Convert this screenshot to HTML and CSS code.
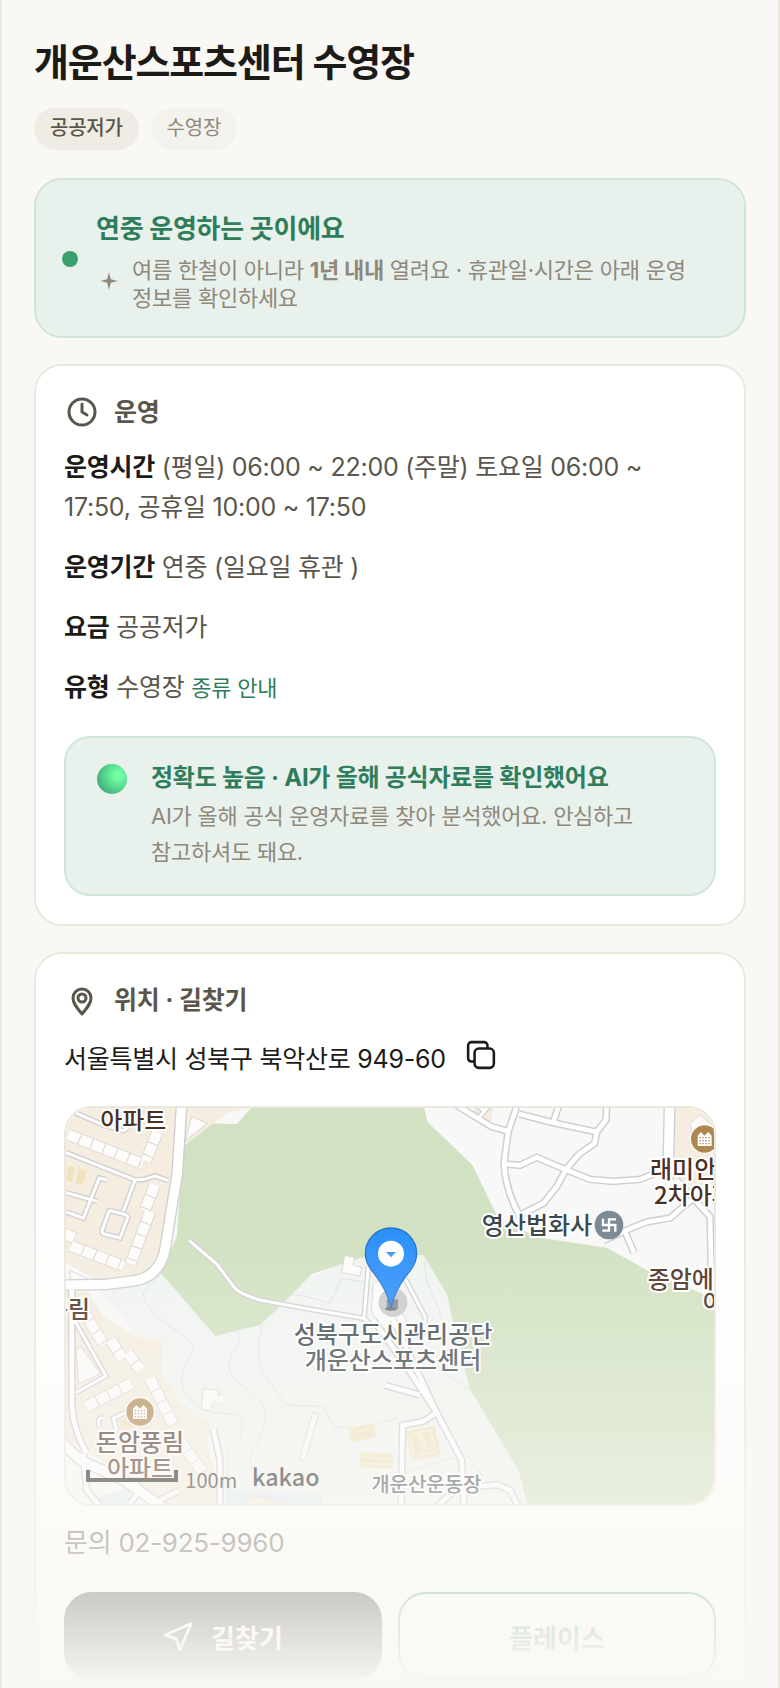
FILE: index.html
```html
<!DOCTYPE html>
<html lang="ko">
  <head>
    <meta charset="UTF-8" />
    <meta name="viewport" content="width=device-width, initial-scale=1.0" />
    <title>개운산스포츠센터 수영장</title>
    <link rel="stylesheet" href="styles.css">
  </head>
  <body>
    <main class="screen">
      <h1>개운산스포츠센터 수영장</h1>
      <div class="chips">
        <span class="chip chip-price">공공저가</span>
        <span class="chip">수영장</span>
      </div>

      <section class="notice">
        <span class="dot"></span>
        <div class="notice-body">
          <h2>연중 운영하는 곳이에요</h2>
          <div class="notice-sub">
            <svg class="sparkle" viewBox="0 0 24 24"><path d="M12 4l1.700 6.300L20 12l-6.300 1.700L12 20l-1.700-6.300L4 12l6.300-1.700z" /></svg>
            <p>여름 한철이 아니라 <b>1년 내내</b> 열려요 · 휴관일·시간은 아래 운영 정보를 확인하세요</p>
          </div>
        </div>
      </section>

      <section class="card">
        <h2 class="card-title">
          <svg viewBox="0 0 36 36"><circle cx="18" cy="18" r="13" /><path d="M18 10v8l5 3" /></svg>
          운영
        </h2>
        <div class="info">
          <p><b>운영시간</b> (평일) 06:00 ~ 22:00 (주말) 토요일 06:00 ~ 17:50, 공휴일 10:00 ~ 17:50</p>
          <p><b>운영기간</b> 연중 (일요일 휴관 )</p>
          <p><b>요금</b> 공공저가</p>
          <p><b>유형</b> 수영장 <a href="#types">종류 안내</a></p>
        </div>
        <div class="accuracy">
          <span class="orb"></span>
          <div>
            <h3>정확도 높음 · AI가 올해 공식자료를 확인했어요</h3>
            <p>AI가 올해 공식 운영자료를 찾아 분석했어요. 안심하고 참고하셔도 돼요.</p>
          </div>
        </div>
      </section>

      <section class="card">
        <h2 class="card-title">
          <svg viewBox="0 0 36 36"><path d="M18 32C12 25 9 21 9 16a9 9 0 0 1 18 0c0 5-3 9-9 16z" /><circle cx="18" cy="16" r="4" /></svg>
          위치 · 길찾기
        </h2>
        <div class="address">
          <span>서울특별시 성북구 북악산로 949-60</span>
          <button class="copy" type="button" aria-label="주소 복사">
            <svg viewBox="0 0 28 28"><rect x="8" y="8" width="18" height="18" rx="4" /><path d="M8 20H5a3 3 0 0 1-3-3V5a3 3 0 0 1 3-3h12a3 3 0 0 1 3 3v3" /></svg>
          </button>
        </div>

        <div class="map">
          <svg viewBox="78 54 1944 1188" preserveAspectRatio="xMidYMid slice">
            <defs>
              <g id="main-roads">
                <path d="M425 40L412 250L378 460Q366 560 280 573L200 583L60 586M60 1050L120 1110L250 1170L380 1260M1889 40L1884 270" />
              </g>
              <g id="roads">
                <path d="M1250 46L1355 110L1405 124L1430 50M1438 72L1540 98L1670 126L1698 90L1700 46M1540 98L1556 46" />
                <path d="M1405 120L1392 220Q1396 300 1440 380M1395 222L1440 226L1490 202L1580 240L1650 268L1720 274L1800 268L1870 240" />
                <path d="M1670 126L1664 160L1620 190L1580 235L1550 290L1510 340L1430 380" />
                <path d="M1690 452L1760 420L1820 396L1890 384L1960 325M1755 425L1782 488M1910 270L1960 325L2010 380L2014 560" />
                <path d="M1060 690L1190 968L1265 1110L1272 1260" />
                <path d="M1000 690L1100 830L1190 968L1150 994L1088 1006L1083 1260M1035 886L1140 915M1180 1260L1250 1195L1370 1184L1410 1200L1440 1260" />
                <path d="M520 1018L540 1110L540 1260M95 600L96 950Q100 1020 140 1090" />
                <path d="M130 1090L140 1200L190 1260M270 1240L300 1200L280 1170M360 1230L418 1202" />
              </g>
              <g id="lanes">
                <path d="M78 188L285 270L312 268L345 258L385 272M285 270L250 364M105 68L190 105L250 122L268 110" />
                <path d="M200 270L178 264L130 384L78 366M78 308L172 334M212 362L256 374Q266 376 262 386L240 444L192 432Q184 428 187 420L204 372Q206 362 212 362" />
                <path d="M448 452L530 522L585 595Q600 612 660 630L810 658L970 685M985 530L972 685L1000 712M1095 565L1155 680L1155 700" />
                <path d="M105 694L198 858L108 908M178 1010Q170 980 190 985M262 965L220 985L230 1020M1310 46L1330 60M1314 86L1345 50" />
              </g>
              <g id="blocks">
                <path d="M84 134L308 222M352 126L318 212M345 284L314 362M330 364L272 522M94 468L250 528M70 430L108 446" />
                <path d="M128 660L192 765M212 750L248 806M262 788L302 840M138 950L275 880M330 866L400 1004M420 1052L486 1144" />
              </g>
            </defs>

            <!-- land -->
            <path fill="#f8f8f8" d="M0 0h2100v1300H0z" />
            <path fill="#f4ede0" d="M0 0H660L632 54L590 68L430 170L378 480L300 560L170 570L60 510zM60 605H145L190 680L290 740L368 752L366 850L420 935L515 1010L500 1060L560 1260H400L60 1030zM1310 40H1362L1352 104L1290 78zM1905 40H2040V320L1905 270z" />
            <path fill="#f0f4f1" d="M362 548L180 606L240 670L290 738L368 752L370 860L430 940L515 1010L560 1260H1470L1440 1140L1290 898L1222 615L1150 480L975 480L660 640z" />
            <path fill="#dfebf2" d="M560 1200L840 1214L850 1260H555zM170 1225L270 1190L260 1260H160z" />
            <path fill="#d1e1c1" d="M636 40L632 54L590 102L520 100L430 170L410 440L362 548L526 738L660 705L730 640L815 552L975 500L1150 495L1222 615L1240 700L1290 898L1435 1140L1468 1260H2040V620L1990 612L1830 545L1700 473L1510 445L1390 400L1370 375L1297 225L1162 95L1150 40z" />
            <path class="plain" d="M520 100L565 68L632 54L590 102zM1725 345L1805 335L1805 395L1725 410z" />
            <path class="trail" d="M365 550L310 610Q305 640 375 700L430 735Q480 770 450 800Q400 870 450 930L500 965L590 975Q620 985 600 1040L565 1080L560 1200M590 720Q610 750 575 790Q550 850 600 880L660 930Q690 970 665 1030L630 1100Q640 1160 650 1200M668 700Q640 800 670 850L740 945L850 950L885 1012L990 1010L1070 985M755 612L800 620L870 640L905 565L970 575M1155 510Q1150 570 1190 640L1215 720M1175 825L1230 860L1295 900M1090 1150L1180 1120L1280 1095L1330 1160" />

            <!-- buildings -->
            <use href="#blocks" class="block-edge" />
            <use href="#blocks" class="block" />
            <path class="building" d="M455 80L502 100L436 152zM108 780L122 770L182 850L116 882zM914 496L943 502L940 525L966 532L960 558L904 548zM490 896L536 900L534 916L548 914L562 930L545 944L522 934L510 962L484 958zM818 968L836 972L796 1112L778 1106zM1000 580L1020 570L1100 690L1060 780L1015 700L994 660zM88 540L146 568L92 570zM1950 100L1980 75L2010 100V140H1960z" />
            <path class="court" d="M82 225l24 8-10 45-18-8zM116 235l24 8-12 44-22-8zM926 1016l76-16 6 40-74 18zM962 1086l98 6-2 44-98-4zM1096 1024l88-16 20 88-88 16zM234 990l34-14 14 34-34 14z" />
            <path class="court-line" d="M940 1028l56-12M970 1102l80 4M970 1120l80 4M1108 1034l28-6 14 66-28 6zM1144 1026l28-6 14 66-28 6z" />
            <path fill="#f3eadb" stroke="#ddd4cc" stroke-width="3" d="M600 1260Q620 1210 660 1220L740 1245V1260z" />

            <!-- roads -->
            <use href="#lanes" class="road-edge lane" />
            <use href="#roads" class="road-edge road" />
            <use href="#main-roads" class="road-edge main" />
            <use href="#lanes" class="road-top lane" />
            <use href="#roads" class="road-top road" />
            <use href="#main-roads" class="road-top main" />

            <!-- places -->
            <g class="apartment">
              <circle cx="300" cy="966" r="43" />
              <circle cx="1994" cy="147" r="43" />
              <path d="M279 987V956L289 945L299 956L311 945L321 956V987z" />
              <path d="M1973 168V137L1983 126L1993 137L2005 126L2015 137V168z" />
              <path class="windows" d="M284 962H320M284 971H320M284 980H320M1978 143H2014M1978 152H2014M1978 161H2014" />
            </g>
            <circle cx="1707" cy="405" r="43" fill="#7c8b93" />
            <path class="temple" d="M1689 386V405H1726V425M1728 388H1707V422H1687" />
            <g class="label brown">
              <text x="280" y="118">아파트</text>
              <text x="300" y="1084">돈암풍림</text>
              <text x="300" y="1160">아파트</text>
              <text x="84" y="684">풍림</text>
              <text class="start" x="1830" y="264">래미안</text>
              <text class="start" x="1842" y="342">2차아파트</text>
              <text class="start" x="1823" y="593">종암에</text>
              <text class="start" x="1988" y="664">아파트</text>
            </g>
            <g class="label slate">
              <text x="1491" y="432">영산법화사</text>
              <text x="1059" y="758">성북구도시관리공단</text>
              <text x="1059" y="836">개운산스포츠센터</text>
              <text class="small" x="1159" y="1205">개운산운동장</text>
            </g>

            <!-- marker -->
            <circle cx="1059" cy="638" r="43" fill="#c9cacd" />
            <rect x="1040" y="628" width="34" height="28" fill="#858a8f" />
            <ellipse cx="1053" cy="657" rx="18" ry="5" fill="#6c6f73" />
            <path class="pin" d="M1053 654Q1042 600 1002 550Q976 520 976 491A77 77 0 0 1 1130 491Q1130 520 1104 550Q1064 600 1053 654z" />
            <circle cx="1053" cy="491" r="39" fill="#fff" />
            <path fill="#3f97f7" d="M1038 486H1068L1053 502z" />

            <path class="scale" d="M144 1140V1170H408V1140" />
            <text class="scale-text" x="436" y="1193">100m</text>
            <text class="kakao" x="636" y="1188">kakao</text>
          </svg>
        </div>

        <p class="contact">문의 02-925-9960</p>
        <div class="actions">
          <button class="btn btn-dark" type="button">
            <svg viewBox="0 0 32 32"><path d="M30 3L2 15l12 4 4 12z" /></svg>
            길찾기
          </button>
          <button class="btn btn-line" type="button">플레이스</button>
        </div>
      </section>
      <div class="fade"></div>
    </main>
  </body>
</html>
```

FILE: styles.css
```css
* {
  box-sizing: border-box;
}

body {
  margin: 0;
  background-color: #faf8f4;
  color: #1c1b18;
  font-family: Inter, "Noto Sans CJK KR", sans-serif;
  font-size: 25px;
  letter-spacing: -0.01em;
  word-break: keep-all;
}

h1,
h2,
h3,
p {
  margin: 0;
}

.screen {
  position: relative;
  height: 100vh;
  overflow: hidden;
  padding: 40px 32px;
  border-left: 2px solid #ebe8e0;
  border-right: 2px solid #ebe8e0;
}

h1 {
  font-size: 38px;
  line-height: 44px;
  letter-spacing: -0.03em;
}

/* Chips */
.chips {
  display: flex;
  gap: 12px;
  margin-top: 24px;
}

.chip {
  height: 42px;
  padding: 0 16px;
  border-radius: 21px;
  background-color: #f4f2ed;
  color: #8f887b;
  font-size: 20px;
  line-height: 40px;
}

.chip-price {
  background-color: #efece5;
  color: #5a564c;
  font-weight: 500;
}

/* Year-round notice */
.notice {
  display: flex;
  align-items: center;
  gap: 18px;
  margin-top: 28px;
  padding: 26px 26px 24px;
  border: 2px solid #d0e5da;
  border-radius: 28px;
  background-color: #e8f1eb;
}

.dot {
  flex: none;
  width: 16px;
  height: 16px;
  border-radius: 50%;
  background-color: #38a16c;
}

.notice h2 {
  color: #2f7d5b;
  font-size: 26px;
  line-height: 46px;
}

.notice-sub {
  display: flex;
  align-items: center;
  gap: 10px;
  margin-top: 4px;
  color: #8f887b;
  font-size: 22px;
  line-height: 28px;
}

.sparkle {
  flex: none;
  width: 26px;
  height: 26px;
  margin-bottom: 6px;
  fill: currentColor;
}

/* Cards */
.card {
  margin-top: 26px;
  padding: 28px;
  border: 2px solid #ebe8e0;
  border-radius: 28px;
  background-color: #fff;
}

.card-title {
  display: flex;
  align-items: center;
  gap: 14px;
  color: #5a564c;
  font-size: 25px;
  line-height: 36px;
}

.card-title svg {
  width: 36px;
  height: 36px;
  fill: none;
  stroke: currentColor;
  stroke-width: 3;
  stroke-linecap: round;
  stroke-linejoin: round;
}

.info {
  display: grid;
  gap: 20px;
  margin-top: 17px;
  padding-right: 12px;
  color: #5a564c;
  line-height: 40px;
}

.info b {
  color: #1c1b18;
}

.info a {
  color: #2f7d5b;
  font-size: 22px;
  text-decoration: none;
}

.accuracy {
  display: flex;
  gap: 24px;
  margin-top: 28px;
  padding: 20px 31px 24px;
  border: 2px solid #d0e5da;
  border-radius: 26px;
  background-color: #e8f1eb;
}

.orb {
  flex: none;
  width: 30px;
  height: 30px;
  margin-top: 6px;
  border-radius: 50%;
  background: radial-gradient(circle at 70% 38%, #72ffa4 12%, #55d98e 45%, #44b083 75%, #5590a0 100%);
}

.accuracy h3 {
  color: #2f7d5b;
  font-size: 24px;
  line-height: 40px;
}

.accuracy p {
  color: #8f887b;
  font-size: 22px;
  line-height: 36px;
}

/* Location */
.address {
  display: flex;
  align-items: center;
  gap: 20px;
  margin-top: 21px;
  line-height: 40px;
}

.copy {
  display: flex;
  margin-bottom: 8px;
  padding: 0;
  border: none;
  background: none;
  color: #1c1b18;
  cursor: pointer;
}

.copy svg {
  width: 30px;
  height: 30px;
  fill: none;
  stroke: currentColor;
  stroke-width: 2.4;
}

.map {
  height: 400px;
  margin-top: 27px;
  overflow: hidden;
  border: 2px solid #ebe8e0;
  border-radius: 28px;
  letter-spacing: normal;
}

.map svg {
  display: block;
  width: 100%;
  height: 100%;
}

.plain {
  fill: #f8f8f8;
}

.trail {
  fill: none;
  stroke: #dde2df;
  stroke-width: 3;
}

.block-edge,
.block,
.road-edge,
.road-top {
  fill: none;
}

.block-edge {
  stroke: #d9d5cf;
  stroke-width: 36px;
}

.block {
  stroke: #fdfcfb;
  stroke-width: 31px;
  stroke-dasharray: 36 3;
}

.building {
  fill: #fcfbfa;
  stroke: #dad8d5;
  stroke-width: 3;
}

.court {
  fill: #eee2bf;
  stroke: #f5ecd2;
  stroke-width: 3;
}

.court-line {
  fill: none;
  stroke: #f8f1df;
  stroke-width: 4;
}

.road-edge {
  stroke: #cfcfd2;
}

.road-top {
  stroke: #fff;
}

.road-edge.lane {
  stroke-width: 17px;
}

.road-top.lane {
  stroke-width: 9px;
}

.road-edge.road {
  stroke-width: 23px;
}

.road-top.road {
  stroke-width: 14px;
}

.road-edge.main {
  stroke-width: 36px;
}

.road-top.main {
  stroke-width: 28px;
}

.apartment circle {
  fill: #af8650;
  stroke: #fff;
  stroke-width: 4;
}

.apartment path {
  fill: #fff;
}

.apartment .windows {
  stroke: #af8650;
  stroke-width: 4;
  stroke-dasharray: 4 5;
}

.temple {
  fill: none;
  stroke: #fff;
  stroke-width: 7;
}

.label {
  font-family: "Noto Sans CJK KR", sans-serif;
  font-size: 72px;
  font-weight: 500;
  text-anchor: middle;
  stroke: #fff;
  stroke-width: 12px;
  stroke-linejoin: round;
  paint-order: stroke;
}

.label .start {
  text-anchor: start;
}

.label .small {
  font-size: 60px;
}

.brown {
  fill: #4b3024;
}

.slate {
  fill: #39474e;
}

.pin {
  fill: #2b8ffa;
  stroke: #2272d0;
  stroke-width: 4;
}

.scale {
  fill: none;
  stroke: #0a0a0a;
  stroke-width: 12;
}

.scale-text {
  fill: #222;
  font-family: "Noto Sans CJK KR", sans-serif;
  font-size: 60px;
}

.kakao {
  fill: #111;
  font-family: "Noto Sans CJK KR", sans-serif;
  font-size: 70px;
  font-weight: 500;
}

.contact {
  margin-top: 17px;
  color: #5a564c;
  font-size: 26px;
  line-height: 40px;
}

.actions {
  display: flex;
  gap: 16px;
  margin-top: 29px;
}

.btn {
  display: flex;
  flex: 1;
  align-items: center;
  justify-content: center;
  gap: 18px;
  height: 88px;
  border: 2px solid #1c1b18;
  border-radius: 28px;
  font-family: inherit;
  font-size: 26px;
  font-weight: 700;
  cursor: pointer;
}

.btn svg {
  width: 30px;
  height: 30px;
  fill: none;
  stroke: currentColor;
  stroke-width: 3;
  stroke-linejoin: round;
}

.btn-dark {
  background-color: #1c1b18;
  color: #fff;
}

.btn-line {
  border-color: #35936b;
  background-color: #fff;
  color: #2f8a63;
}

/* Bottom fade over the cut-off content */
.fade {
  position: absolute;
  right: 0;
  bottom: 0;
  left: 0;
  height: 460px;
  background: linear-gradient(rgba(250, 248, 244, 0), #faf8f4);
  pointer-events: none;
}
```
